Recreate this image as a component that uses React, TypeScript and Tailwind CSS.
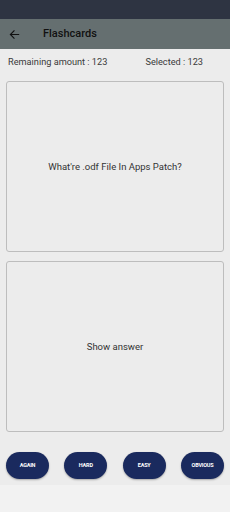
import React from "react";

export default function App() {
  const btns = ["AGAIN", "HARD", "EASY", "OBVIOUS"];
  return (
    <div className="w-[230px] h-[512px] bg-[#f2f2f2] flex flex-col" style={{ fontFamily: "Roboto, 'Liberation Sans', sans-serif" }}>
      <div className="h-[19px] bg-[#2e3442]" />
      <div className="h-[30px] bg-[#656f70] flex items-center">
        <svg className="ml-[9px]" width="11" height="11" viewBox="0 0 24 24" fill="none" stroke="#111" strokeWidth="2.4" strokeLinecap="square">
          <path d="M21 12H4M11 4l-8 8 8 8" />
        </svg>
        <span className="ml-[23px] text-[11px] text-[#111] font-medium">Flashcards</span>
      </div>
      <div className="bg-[#ececec] flex flex-col h-[436px]">
        <div className="flex justify-between px-[8px] pt-[6px] h-[32px] text-[9.2px] text-[#3a3a3a]">
          <span>Remaining amount : 123</span>
          <span className="mr-[19px]">Selected : 123</span>
        </div>
        <div className="mx-[6px] h-[171px] border border-[#bdbdbd] rounded-[3px] flex items-center justify-center text-[9.5px] text-[#333]">
          <span className="mt-[2px]">What're .odf File In Apps Patch?</span>
        </div>
        <div className="mx-[6px] mt-[9px] h-[171px] border border-[#bdbdbd] rounded-[3px] flex items-center justify-center text-[9.5px] text-[#333]">
          <span className="mt-[2px]">Show answer</span>
        </div>
        <div className="flex justify-between px-[6px] mt-[20px]">
          {btns.map((b) => (
            <div key={b} className="w-[43px] h-[27px] rounded-full bg-[#1a2a5e] flex items-center justify-center text-white text-[5.5px] font-bold tracking-[-0.2px] shadow-[0_1px_2px_rgba(0,0,0,0.3)]">
              {b}
            </div>
          ))}
        </div>
      </div>
    </div>
  );
}
